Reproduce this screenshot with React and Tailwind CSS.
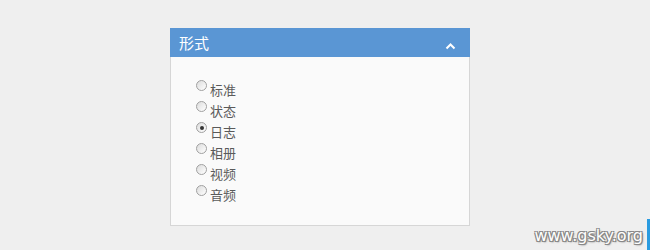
const options = ["标准", "状态", "日志", "相册", "视频", "音频"];

function Radio({ checked }) {
  return (
    <span className="mt-[1px] mr-[3px] flex h-[11px] w-[11px] shrink-0 items-center justify-center rounded-full border border-[#a0a0a0] bg-gradient-to-br from-[#dcdcdc] to-white">
      {checked && <span className="h-[4px] w-[4px] rounded-full bg-[#333]" />}
    </span>
  );
}

export default function App() {
  return (
    <div
      className="relative h-[250px] w-[650px] overflow-hidden bg-[#efefef]"
      style={{ fontFamily: '"Noto Sans CJK SC", "Liberation Sans", sans-serif' }}
    >
      <div className="absolute left-[170px] top-[28px] w-[300px]">
        <div className="flex h-[29px] items-center justify-between bg-[#5a96d4] pl-[9px] pr-[14px]">
          <span className="text-[15px] leading-none text-white">形式</span>
          <svg width="11" height="8" viewBox="0 0 11 8" className="mt-[6px]">
            <path d="M1.5 6.5 L5.5 2.5 L9.5 6.5" fill="none" stroke="white" strokeWidth="2" />
          </svg>
        </div>
        <div className="h-[169px] border border-t-0 border-[#d6d6d6] bg-[#fafafa] pl-[25px] pt-[22px]">
          {options.map((o, i) => (
            <div key={o} className="flex h-[21px] items-start">
              <Radio checked={i === 2} />
              <span className="text-[13px] leading-[21px] text-[#5a5a5a]">{o}</span>
            </div>
          ))}
        </div>
      </div>
      <div
        className="absolute bottom-[6px] right-[7px] text-[16px] leading-none text-white"
        style={{ textShadow: "1px 1px 0 #888, -1px -1px 0 #888, 1px -1px 0 #888, -1px 1px 0 #888, 1px 1px 2px #666", fontFamily: '"DejaVu Sans", sans-serif' }}
      >
        www.gsky.org
      </div>
      <div className="absolute bottom-0 right-0 h-[31px] w-[3px] bg-[#2a9be0]" />
    </div>
  );
}
